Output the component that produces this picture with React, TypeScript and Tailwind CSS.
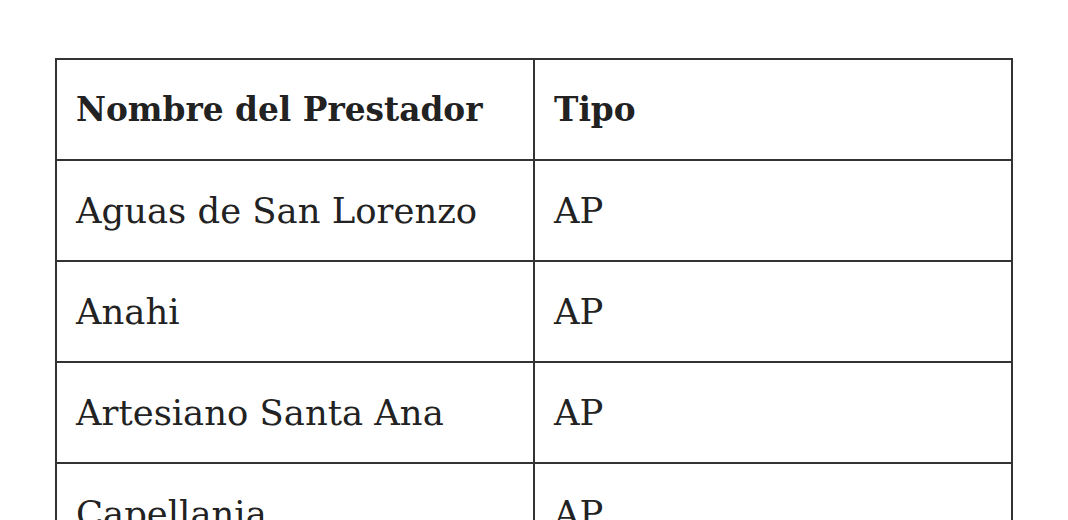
const rows = [
  ['Aguas de San Lorenzo', 'AP'],
  ['Anahi', 'AP'],
  ['Artesiano Santa Ana', 'AP'],
  ['Capellania', 'AP'],
];

export default function App() {
  return (
    <div className="h-screen overflow-hidden bg-white px-[55px] pt-[58px] text-[#222]" style={{ fontFamily: '"DejaVu Serif", serif' }}>
      <table className="w-full table-fixed border-collapse border-2 border-[#333]">
        <thead>
          <tr className="h-[101px]">
            <th className="border-2 border-[#333] px-[19px] text-left align-middle text-[32.8px] font-bold">Nombre del Prestador</th>
            <th className="border-2 border-[#333] px-[19px] text-left align-middle text-[32.8px] font-bold">Tipo</th>
          </tr>
        </thead>
        <tbody>
          {rows.map(([name, tipo]) => (
            <tr key={name} className="h-[101px]">
              <td className="border-2 border-[#333] px-[19px] align-middle text-[35.4px]">{name}</td>
              <td className="border-2 border-[#333] px-[19px] align-middle text-[35.4px]">{tipo}</td>
            </tr>
          ))}
        </tbody>
      </table>
    </div>
  );
}
